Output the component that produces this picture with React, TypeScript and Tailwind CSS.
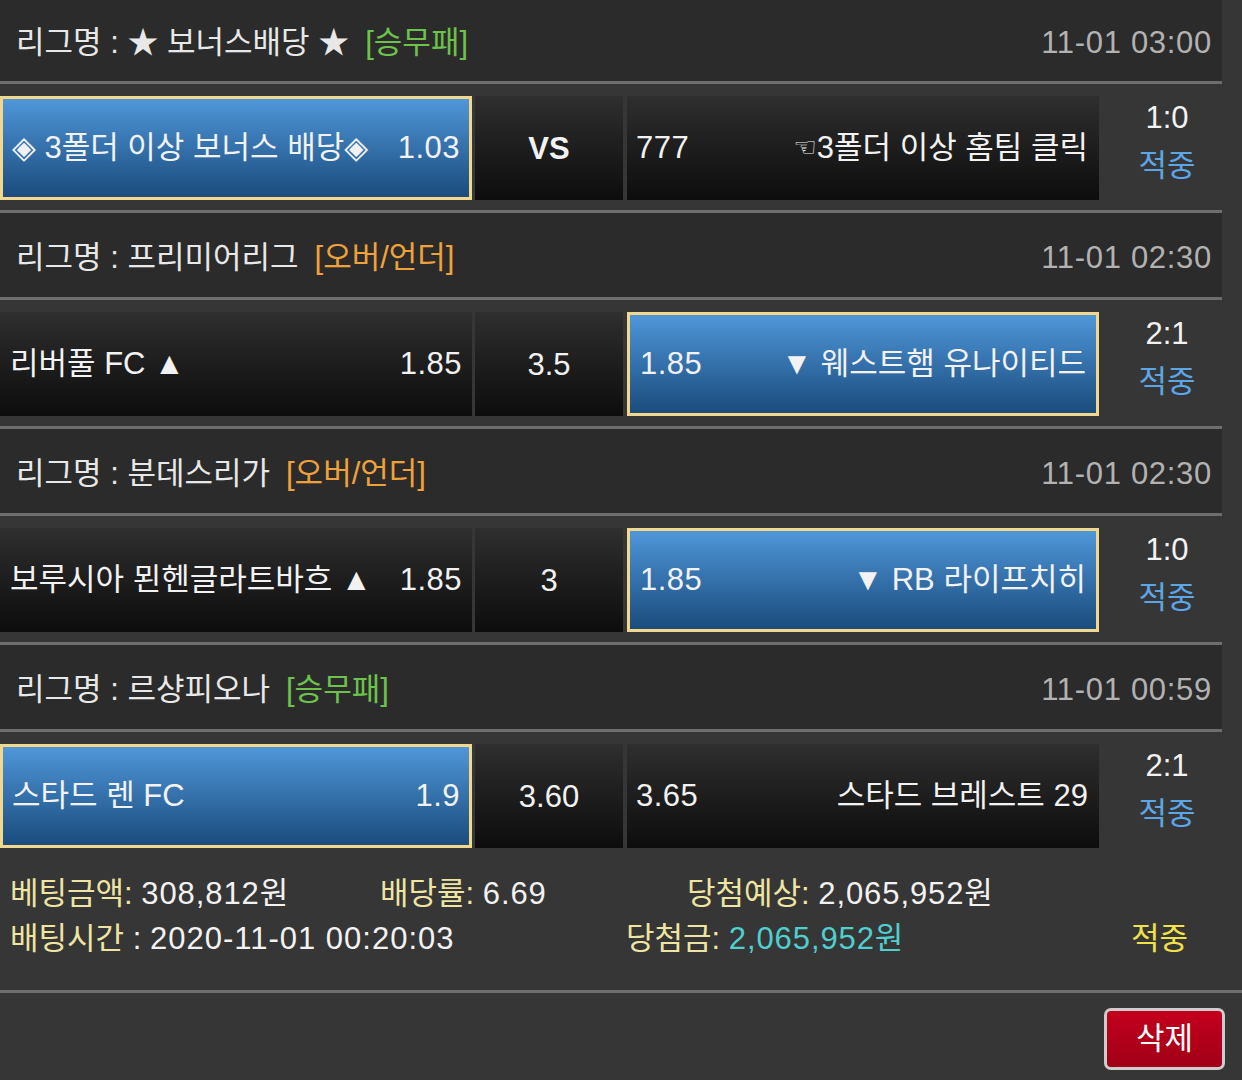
import React from "react";

type Match = {
  league: string;
  tag: string;
  tagColor: "green" | "orange";
  time: string;
  home: string;
  homeOdds: string;
  mid: string;
  midBold?: boolean;
  away: React.ReactNode;
  awayOdds: string;
  pick: "home" | "away";
  score: string;
};

const MATCHES: Match[] = [
  {
    league: "리그명 : ★ 보너스배당 ★",
    tag: "[승무패]",
    tagColor: "green",
    time: "11-01 03:00",
    home: "◈ 3폴더 이상 보너스 배당◈",
    homeOdds: "1.03",
    mid: "VS",
    midBold: true,
    away: (
      <>
        <span className="text-[26px] align-[2px]" style={{ fontFamily: '"DejaVu Sans", sans-serif' }}>☜</span>3폴더 이상 홈팀 클릭
      </>
    ),
    awayOdds: "777",
    pick: "home",
    score: "1:0",
  },
  {
    league: "리그명 : 프리미어리그",
    tag: "[오버/언더]",
    tagColor: "orange",
    time: "11-01 02:30",
    home: "리버풀 FC ▲",
    homeOdds: "1.85",
    mid: "3.5",
    away: "▼ 웨스트햄 유나이티드",
    awayOdds: "1.85",
    pick: "away",
    score: "2:1",
  },
  {
    league: "리그명 : 분데스리가",
    tag: "[오버/언더]",
    tagColor: "orange",
    time: "11-01 02:30",
    home: "보루시아 묀헨글라트바흐 ▲",
    homeOdds: "1.85",
    mid: "3",
    away: "▼ RB 라이프치히",
    awayOdds: "1.85",
    pick: "away",
    score: "1:0",
  },
  {
    league: "리그명 : 르샹피오나",
    tag: "[승무패]",
    tagColor: "green",
    time: "11-01 00:59",
    home: "스타드 렌 FC",
    homeOdds: "1.9",
    mid: "3.60",
    away: "스타드 브레스트 29",
    awayOdds: "3.65",
    pick: "home",
    score: "2:1",
  },
];

const cellBase = "h-[104px] flex items-center";
const darkCell = "bg-linear-to-b from-[#2f2f2f] to-[#0d0d0d]";
const blueCell = "bg-linear-to-b from-[#4f97da] to-[#1b4c7d] border-[3px] border-[#f2d88c]";
const label = "text-[#eee5a2]";

export default function App() {
  return (
    <div
      className="w-[1242px] h-[1080px] bg-[#363636] overflow-hidden text-[31px] text-[#f2f2f2]"
      style={{ fontFamily: '"Liberation Sans", "Noto Sans CJK KR", "DejaVu Sans", sans-serif' }}
    >
      {MATCHES.map((m, i) => (
        <div key={i}>
          {i > 0 && <div className="h-[3px] w-[1222px] bg-[#6e6e6e]" />}
          {/* League header */}
          <div
            className={`w-[1222px] bg-[#2b2b2b] flex items-center justify-between pl-[16px] pr-[10px] ${
              i === 0 ? "h-[81px] pt-[6px]" : "h-[84px] pt-[7px]"
            }`}
          >
            <div className="flex items-center text-[#e8e8e8]">
              <span>{m.league}</span>
              <span className={`ml-[16px] ${m.tagColor === "green" ? "text-[#6cc24a]" : "text-[#f0a23a]"}`}>{m.tag}</span>
            </div>
            <span className="text-[#b2b2b2] tracking-[0.7px]">{m.time}</span>
          </div>
          <div className="h-[3px] w-[1222px] bg-[#6e6e6e]" />

          {/* Match row */}
          <div className="flex pt-[12px] pb-[10px]">
            <div
              className={`${cellBase} w-[472px] justify-between ${
                m.pick === "home" ? `${blueCell} pl-[9px] pr-[9px]` : `${darkCell} pl-[10px] pr-[10px]`
              }`}
            >
              <span className="whitespace-nowrap">{m.home}</span>
              <span className="tracking-[0.5px]">{m.homeOdds}</span>
            </div>
            <div className={`${cellBase} ${darkCell} w-[148px] ml-[3px] justify-center pt-[3px] ${m.midBold ? "font-bold" : ""}`}>
              {m.mid}
            </div>
            <div
              className={`${cellBase} w-[472px] ml-[4px] justify-between ${
                m.pick === "away" ? `${blueCell} pl-[10px] pr-[10px]` : `${darkCell} pl-[9px] pr-[11px]`
              }`}
            >
              <span className="tracking-[0.5px]">{m.awayOdds}</span>
              <span className="whitespace-nowrap">{m.away}</span>
            </div>
            <div className="w-[136px] h-[104px] flex flex-col items-center justify-center leading-[48px] pb-[12px]">
              <span>{m.score}</span>
              <span className="text-[#5ba6e6]">적중</span>
            </div>
          </div>
        </div>
      ))}

      {/* Bet summary */}
      <div className="pt-[14px] pl-[10px] pb-[28px]">
        <div className="flex items-center h-[45px] whitespace-nowrap">
          <span className="w-[370px]">
            <span className={label}>베팅금액:</span> <span className="tracking-[0.9px]">308,812</span>원
          </span>
          <span className="w-[307px]">
            <span className={label}>배당률:</span> <span className="tracking-[0.9px]">6.69</span>
          </span>
          <span>
            <span className={label}>당첨예상:</span> <span className="tracking-[0.9px]">2,065,952</span>원
          </span>
        </div>
        <div className="flex items-center h-[45px] whitespace-nowrap">
          <span className="w-[616px]">
            <span className={label}>배팅시간</span> : <span className="tracking-[1px]">2020-11-01 00:20:03</span>
          </span>
          <span className="w-[505px]">
            <span className={label}>당첨금:</span>{" "}
            <span className="text-[#4fcfcf]">
              <span className="tracking-[0.9px]">2,065,952</span>원
            </span>
          </span>
          <span className="text-[#f2e24a]">적중</span>
        </div>
      </div>
      <div className="h-[3px] w-full bg-[#6e6e6e]" />

      {/* Actions */}
      <div className="flex justify-end pt-[15px] pr-[17px]">
        <button className="w-[121px] h-[62px] rounded-[7px] border-[3px] border-[#cdcdcd] bg-linear-to-b from-[#c4001e] to-[#a00016] text-white text-[31px] flex items-center justify-center">
          삭제
        </button>
      </div>
    </div>
  );
}
